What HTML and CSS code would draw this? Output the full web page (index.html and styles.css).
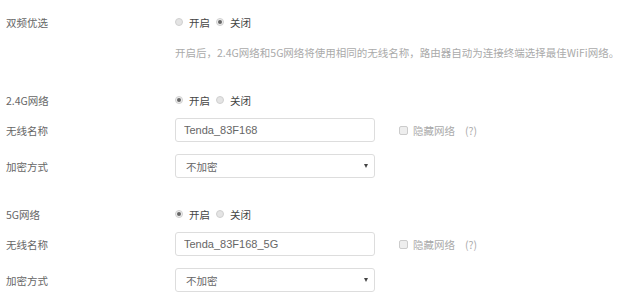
FILE: index.html
```html
<!DOCTYPE html>
<html lang="zh-CN">
<head>
    <meta charset="UTF-8">
    <meta name="viewport" content="width=device-width, initial-scale=1.0">
    <title>无线设置</title>
    <link rel="stylesheet" href="styles.css">
</head>
<body>
    <div class="container">
        <!-- 双频优选 -->
        <div class="section">
            <div class="row row-radio">
                <label class="label">双频优选</label>
                <div class="control">
                    <span class="radio"></span><span class="radio-text">开启</span>
                    <span class="radio checked"></span><span class="radio-text">关闭</span>
                </div>
            </div>
            <div class="row help">
                <span class="label"></span>
                <div class="control">开启后，2.4G网络和5G网络将使用相同的无线名称，路由器自动为连接终端选择最佳WiFi网络。</div>
            </div>
        </div>

        <!-- 2.4G -->
        <div class="section">
            <div class="row row-radio">
                <label class="label">2.4G网络</label>
                <div class="control">
                    <span class="radio checked"></span><span class="radio-text">开启</span>
                    <span class="radio"></span><span class="radio-text">关闭</span>
                </div>
            </div>
            <div class="row">
                <label class="label">无线名称</label>
                <div class="control">
                    <input class="text-input" type="text" value="Tenda_83F168">
                    <span class="checkbox"></span><span class="check-text">隐藏网络</span><span class="tip">(?)</span>
                </div>
            </div>
            <div class="row">
                <label class="label">加密方式</label>
                <div class="control">
                    <div class="select"><span>不加密</span><span class="arrow"></span></div>
                </div>
            </div>
        </div>

        <!-- 5G -->
        <div class="section">
            <div class="row row-radio">
                <label class="label">5G网络</label>
                <div class="control">
                    <span class="radio checked"></span><span class="radio-text">开启</span>
                    <span class="radio"></span><span class="radio-text">关闭</span>
                </div>
            </div>
            <div class="row">
                <label class="label">无线名称</label>
                <div class="control">
                    <input class="text-input" type="text" value="Tenda_83F168_5G">
                    <span class="checkbox"></span><span class="check-text">隐藏网络</span><span class="tip">(?)</span>
                </div>
            </div>
            <div class="row">
                <label class="label">加密方式</label>
                <div class="control">
                    <div class="select"><span>不加密</span><span class="arrow"></span></div>
                </div>
            </div>
        </div>
    </div>
</body>
</html>
```

FILE: styles.css
```css
body {
    margin: 0;
    padding: 10px 6px 0;
    background-color: #fff;
    font-family: "Noto Sans CJK SC", "Liberation Sans", sans-serif;
    font-size: 10.5px;
    color: #666;
}

.section {
    margin-bottom: 24px;
}

.section:last-child {
    margin-bottom: 0;
}

.row {
    display: flex;
    align-items: center;
    height: 24px;
    margin-bottom: 12px;
}

.row:last-child {
    margin-bottom: 0;
}

.row-radio {
    margin-bottom: 6px;
}

.help {
    color: #aaa;
}

.section:first-child .row:last-child {
    margin-bottom: 2px;
}

.label {
    width: 169px;
    flex-shrink: 0;
    color: #666;
}

.control {
    display: flex;
    align-items: center;
    white-space: nowrap;
}

/* Radio buttons */
.radio {
    box-sizing: border-box;
    width: 8px;
    height: 8px;
    border-radius: 50%;
    border: 1px solid #d0d0d0;
    background-color: #e4e4e4;
    position: relative;
}

.radio.checked {
    background-color: #eee;
}

.radio.checked::after {
    content: "";
    position: absolute;
    left: 1px;
    top: 1px;
    width: 4px;
    height: 4px;
    border-radius: 50%;
    background-color: #666;
}

.radio-text {
    margin: 0 6px;
    color: #444;
}

/* Inputs */
.text-input {
    box-sizing: border-box;
    width: 200px;
    height: 24px;
    padding: 0 8px;
    border: 1px solid #ddd;
    border-radius: 3px;
    font-family: "Liberation Sans", "Noto Sans CJK SC", sans-serif;
    font-size: 11px;
    color: #666;
    outline: none;
}

.checkbox {
    box-sizing: border-box;
    width: 9px;
    height: 9px;
    margin-left: 24px;
    border: 1px solid #ccc;
    border-radius: 2px;
    background-color: #eee;
}

.check-text {
    margin-left: 5px;
    color: #aaa;
}

.tip {
    margin-left: 10px;
    color: #aaa;
}

.select {
    box-sizing: border-box;
    width: 200px;
    height: 24px;
    padding: 0 6px 0 10px;
    border: 1px solid #ddd;
    border-radius: 3px;
    display: flex;
    align-items: center;
    justify-content: space-between;
    color: #666;
}

.arrow {
    width: 0;
    height: 0;
    border-left: 2px solid transparent;
    border-right: 2px solid transparent;
    border-top: 4px solid #444;
}
```
